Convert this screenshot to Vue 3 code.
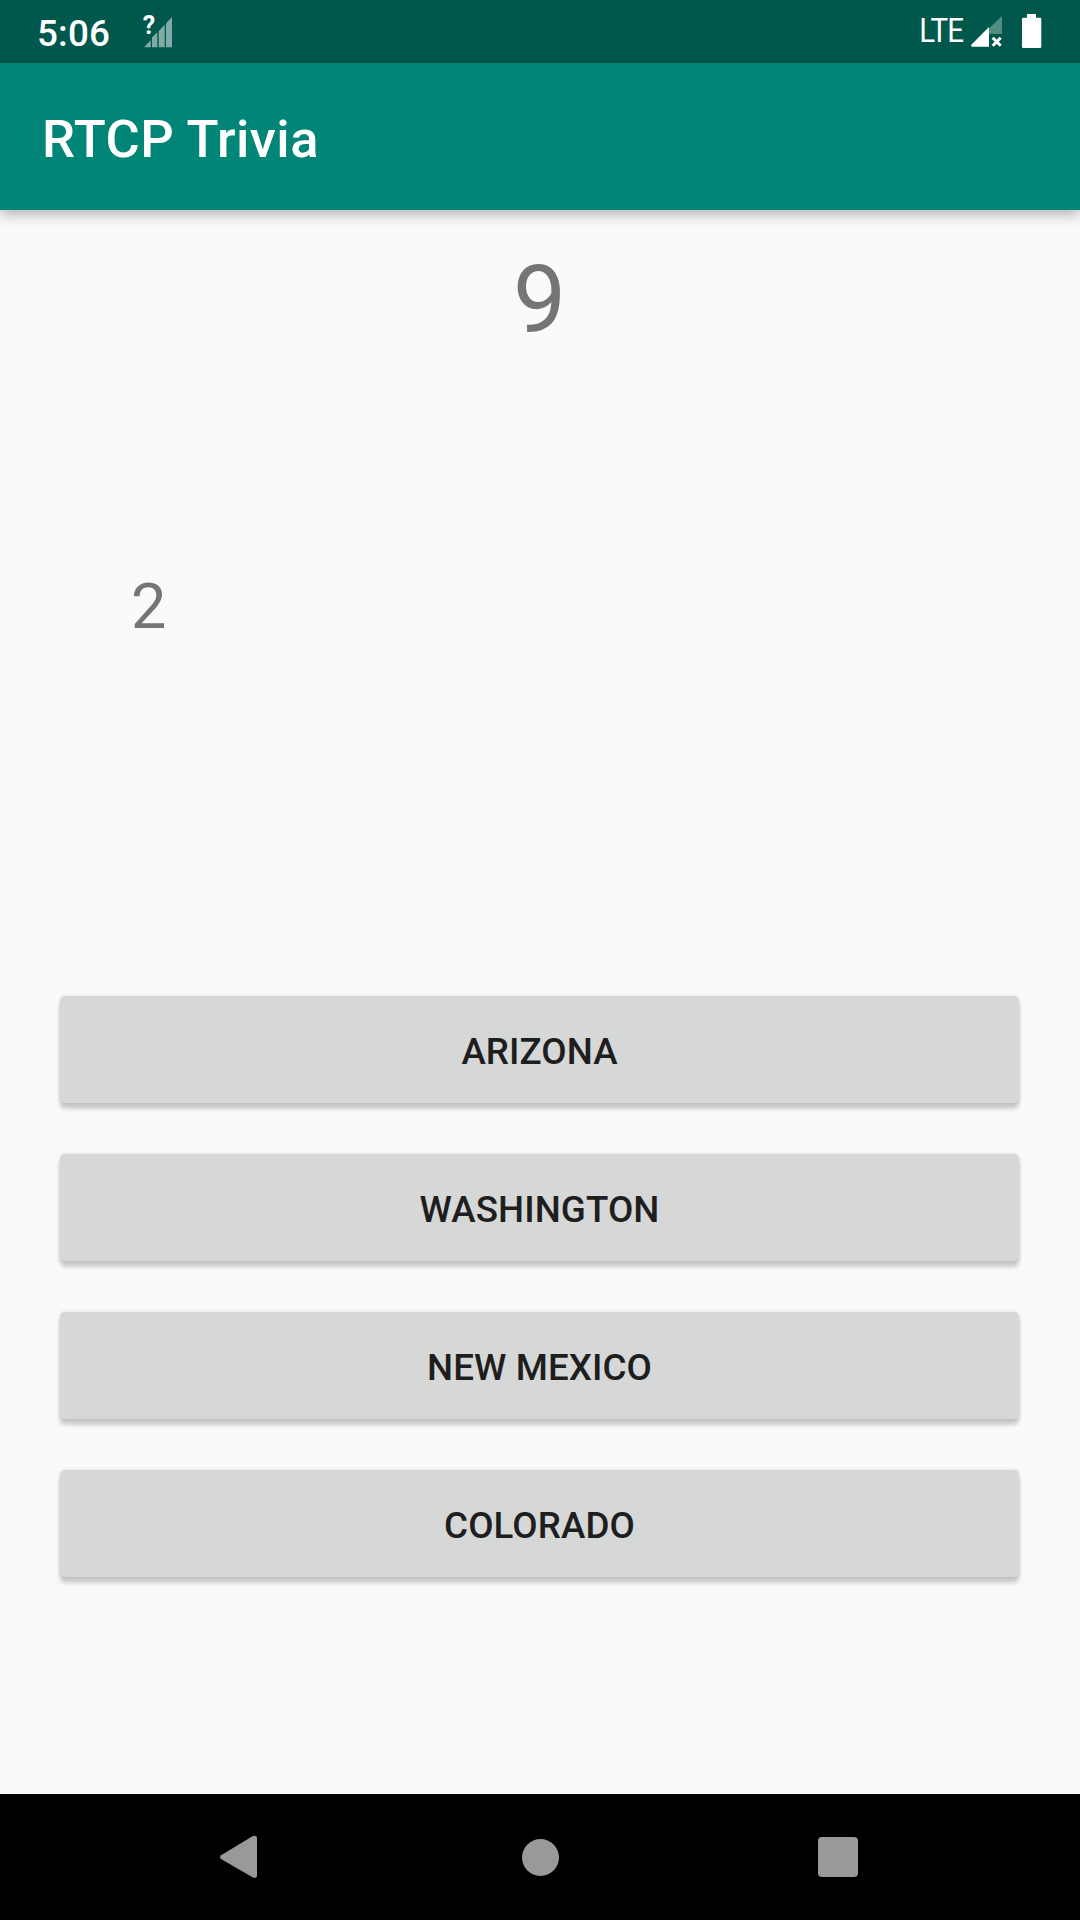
<script setup>
const answers = ['Arizona', 'Washington', 'New Mexico', 'Colorado']
</script>

<template>
  <div class="screen">
    <header class="status">
      <span class="clock">5:06</span>
      <svg class="unknown" width="32" height="36" viewBox="142 14 32 36">
        <path d="M144 47.3L150.7 40.3V47.3ZM152 47.3V37.5L157.3 32.2V47.3ZM158.7 47.3V31L164.7 24.8V47.3ZM166 47.3V23.4L172 17V47.3Z" fill="#fff" fill-opacity=".5" />
        <text x="142.8" y="34" class="mark">?</text>
      </svg>
      <span class="lte">LTE</span>
      <svg class="signal" width="32" height="36" viewBox="971 14 32 36">
        <path d="M989 28.5L1002 16V34H989Z" fill="#fff" fill-opacity=".32" />
        <path d="M989 27V46.7H972Q970.5 46.2 971.3 44.7Z" fill="#fff" />
        <path d="M992.7 37.7L1000.7 45.7M1000.7 37.7L992.7 45.7" stroke="#fff" stroke-width="3" />
      </svg>
      <svg class="battery" width="20" height="36" viewBox="1022 14 20 36">
        <path d="M1027 14H1036V17.7H1040Q1041.3 17.7 1041.3 19V46.5Q1041.3 48 1040 48H1023.3Q1022 48 1022 46.5V19Q1022 17.7 1023.3 17.7H1027Z" fill="#fff" />
      </svg>
    </header>
    <div class="appbar"><h1>RTCP Trivia</h1></div>
    <main>
      <div class="timer">9</div>
      <div class="score">2</div>
      <div class="answers">
        <button v-for="a in answers" :key="a">{{ a }}</button>
      </div>
    </main>
    <nav>
      <svg width="38" height="44" viewBox="219 1834 38 44">
        <path d="M252.5 1836.3Q257 1834.6 257 1838.5V1875.5Q257 1879.2 252.5 1877.3L221 1859Q219 1857 221 1855.2Z" fill="#999" />
      </svg>
      <i class="home"></i>
      <i class="recent"></i>
    </nav>
  </div>
</template>

<style>
body { margin: 0; }
</style>

<style scoped>
.screen {
  width: 1080px;
  height: 1920px;
  display: flex;
  flex-direction: column;
  background: #fafafa;
  font-family: Roboto, sans-serif;
  overflow: hidden;
}
.status {
  height: 63px;
  flex: none;
  display: flex;
  align-items: flex-start;
  box-sizing: border-box;
  padding: 0 38px 0 37px;
  background: #00574b;
  color: #fff;
}
.clock {
  width: 105px;
  font-size: 36.75px;
  font-weight: 500;
  line-height: 67px;
  letter-spacing: 0.2px;
}
.status svg { margin-top: 14px; flex: none; overflow: visible; }
.mark { font: bold 25px Roboto, sans-serif; fill: #fff; }
.lte {
  width: 52px;
  margin-left: auto;
  font-size: 32.8px;
  font-weight: 400;
  line-height: 63px;
  letter-spacing: -0.8px;
  transform: scaleX(0.9);
  transform-origin: 2px 50%;
}
.battery { margin-left: 19px; }
.appbar {
  height: 147px;
  flex: none;
  background: #008577;
  box-shadow: 0 5px 12px rgba(0, 0, 0, 0.27);
}
h1 {
  margin: 0;
  padding-left: 42px;
  font-size: 52.5px;
  font-weight: 500;
  line-height: 152px;
  letter-spacing: 0.45px;
  color: #fff;
}
main { flex: 1; color: #757575; }
.timer {
  margin: 34px 1px 0 0;
  font-size: 94.5px;
  line-height: 111px;
  text-align: center;
}
.score {
  margin: 214px 0 0 131px;
  font-size: 63px;
  line-height: 75px;
}
.answers {
  margin: 352px 61px 0 60px;
  display: flex;
  flex-direction: column;
  gap: 51px;
}
button {
  height: 107px;
  padding: 4px 0 0;
  border: 0;
  border-radius: 5px;
  background: #d6d8d7;
  box-shadow: 0 6px 4px rgba(0, 0, 0, 0.19), 0 0 4px rgba(0, 0, 0, 0.12);
  font: 500 36.75px Roboto, sans-serif;
  letter-spacing: 0.08px;
  text-transform: uppercase;
  color: #1e1e1e;
}
nav {
  height: 126px;
  flex: none;
  display: flex;
  align-items: center;
  box-sizing: border-box;
  padding-left: 219px;
  background: #000;
}
nav svg { margin-bottom: 2px; }
.home {
  width: 37px;
  height: 37px;
  margin-left: 265px;
  border-radius: 50%;
  background: #999;
}
.recent {
  width: 40px;
  height: 40px;
  margin-left: 259px;
  border-radius: 4px;
  background: #999;
}
</style>
